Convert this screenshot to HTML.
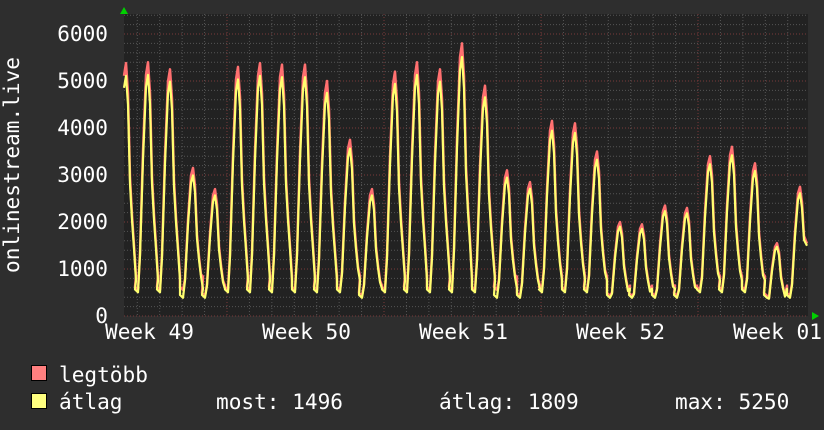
<!DOCTYPE html>
<html><head><meta charset="utf-8"><style>
html,body{margin:0;padding:0;background:#2e2e2e;}
body{width:824px;height:430px;overflow:hidden;position:relative;font-family:"DejaVu Sans Mono","Liberation Mono",monospace;color:#fff;}
svg{position:absolute;left:0;top:0}
</style></head><body>
<svg id="g" width="824" height="430" xmlns="http://www.w3.org/2000/svg">
<rect x="124" y="14" width="684" height="302" fill="#222"/>
<g id="grid"></g>
<path id="mx" fill="none" stroke="#ff7070" stroke-width="2.5" stroke-linejoin="round"/>
<path id="av" fill="none" stroke="#ffff70" stroke-width="2.2" stroke-linejoin="round"/>
<polygon points="120,14 128,14 124,7" fill="#00d000"/>
<polygon points="812,312 812,320 819,316" fill="#00d000"/>
<g font-family="DejaVu Sans Mono, Liberation Mono, monospace" font-size="21.1" fill="#fff" text-anchor="end">
<text x="108" y="41">6000</text><text x="108" y="88">5000</text><text x="108" y="135">4000</text>
<text x="108" y="182">3000</text><text x="108" y="229">2000</text><text x="108" y="276">1000</text>
<text x="108" y="323">0</text>
</g>
<g font-family="DejaVu Sans Mono, Liberation Mono, monospace" font-size="21.1" fill="#fff">
<text x="105" y="339">Week 49</text><text x="262" y="339">Week 50</text><text x="419" y="339">Week 51</text>
<text x="576" y="339">Week 52</text><text x="733" y="339">Week 01</text>
<text transform="translate(19,165) rotate(-90)" text-anchor="middle">onlinestream.live</text>
<text x="59" y="382">legtöbb</text>
<text x="59" y="409">átlag</text>
<text x="216" y="409">most: 1496</text>
<text x="439" y="409">átlag: 1809</text>
<text x="675" y="409">max: 5250</text>
</g>
<rect x="31.5" y="365.5" width="15" height="15" fill="#ff7f7f" stroke="#000"/>
<rect x="31.5" y="393.5" width="15" height="15" fill="#ffff7f" stroke="#000"/>
</svg>
<script>
var g=document.getElementById("grid"),h="";
for(var v=0;v<=6600;v+=200){var y=316-v*0.047;if(y<14)break;
h+='<line x1="124" x2="808" y1="'+y+'" y2="'+y+'" stroke="'+(v%1000==0?'#7a3a3a':'#555')+'" stroke-dasharray="1,2"/>';}
for(var i=-10;i<40;i++){var x=227+i*22.43;if(x<124||x>808)continue;
h+='<line y1="14" y2="316" x1="'+x+'" x2="'+x+'" stroke="'+(i%7==0?'#7a3a3a':'#555')+'" stroke-dasharray="1,2"/>';}
g.innerHTML=h;
var pk=[[126,5380],[148,5400],[170,5250],[193,3150],[215,2700],[238,5300],[260,5380],[282,5350],[305,5350],[327,5000],[350,3750],[372,2700],[395,5200],[417,5400],[440,5250],[462,5800],[485,4900],[507,3100],[530,2850],[552,4150],[575,4100],[597,3500],[620,2000],[642,1950],[665,2350],[687,2300],[710,3400],[732,3600],[755,3250],[777,1550],[800,2750]];
function Y(v){return 316-v*0.047}
function build(f){var p=[];
for(var k=0;k<pk.length;k++){var px=pk[k][0],pv=pk[k][1]*f,tr=(pv>3000?560:430)*(f<1?0.9:1);
if(k>0){p.push([px-13,tr+60],[px-10,tr]);}
if(k==pk.length-1){p.push([px-8,pv*0.25],[px-5,pv*0.65],[px-2,pv*0.95],[px,pv],[px+2,pv*0.88],[px+4,pv*0.62],[807,1496*(f<1?1:1.03)]);break;}
p.push([px-8,pv*0.25],[px-5,pv*0.65],[px-2,pv*0.95],[px,pv],[px+2,pv*0.88],[px+4,pv*0.55],[px+6,pv*0.4],[px+8,pv*0.28],[px+10,tr*1.5]);}
p=p.filter(function(a){return a[0]>=124&&a[0]<=808});
return "M"+p.map(function(a){return a[0].toFixed(1)+","+Y(a[1]).toFixed(1)}).join(" L");}
document.getElementById("mx").setAttribute("d",build(1));
document.getElementById("av").setAttribute("d",build(0.95));
</script>
</body></html>
